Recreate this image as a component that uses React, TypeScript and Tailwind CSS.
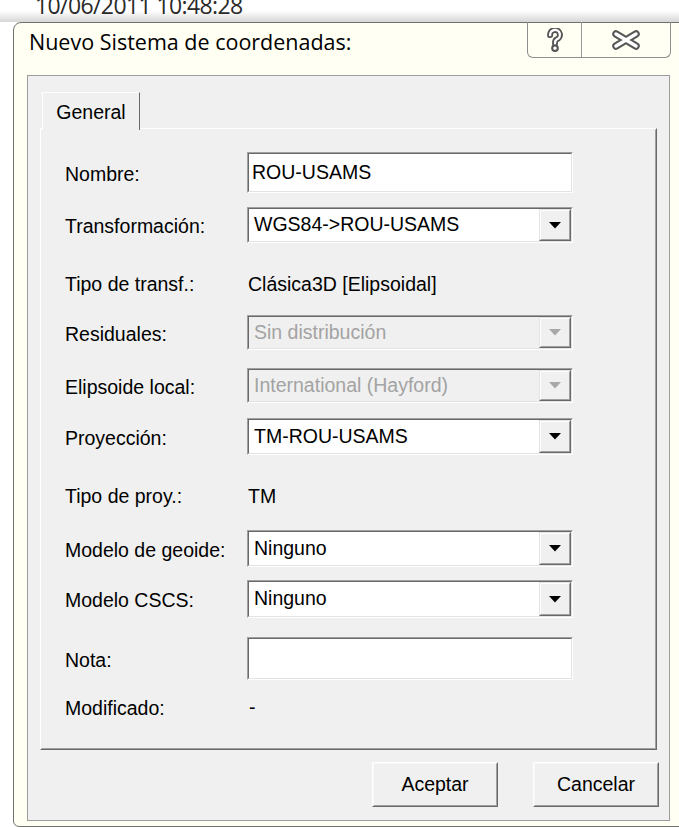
import React from 'react';

const ui = "font-['Liberation_Sans',Arial,sans-serif]";
const seg = "font-['Open_Sans','Noto_Sans',sans-serif]";

// sunken 3D edge used by text boxes and combo boxes
const Sunken = ({ className = '', children }: { className?: string; children?: React.ReactNode }) => (
  <div className={`border border-t-[#a0a0a0] border-l-[#a0a0a0] border-b-white border-r-white ${className}`}>
    <div className="h-full border border-t-[#696969] border-l-[#696969] border-b-[#e3e3e3] border-r-[#e3e3e3]">
      {children}
    </div>
  </div>
);

const Arrow = ({ disabled }: { disabled?: boolean }) => (
  <svg width="12" height="7" viewBox="0 0 12 7">
    <polygon points="0,0 12,0 6,6.5" fill={disabled ? '#a8a8a8' : '#000'} />
  </svg>
);

const TextBox = ({ value, h }: { value?: string; h: string }) => (
  <Sunken className={`w-[326px] ${h}`}>
    <div className="h-full bg-white flex items-center pl-[3px] text-[19.5px] text-black">{value}</div>
  </Sunken>
);

const Combo = ({ value, h, disabled }: { value: string; h: string; disabled?: boolean }) => (
  <Sunken className={`w-[326px] ${h}`}>
    <div className={`h-full flex items-center ${disabled ? 'bg-[#f0f0f0] text-[#a3a3a3]' : 'bg-white text-black'}`}>
      <div className="flex-1 pl-[5px] text-[19.5px] whitespace-nowrap">{value}</div>
      <div className="h-full w-[32px] border border-t-[#e3e3e3] border-l-[#e3e3e3] border-b-[#696969] border-r-[#696969]">
        <div className="h-full border border-t-white border-l-white border-b-[#a0a0a0] border-r-[#a0a0a0] bg-[#f0f0f0] flex items-center justify-center">
          <Arrow disabled={disabled} />
        </div>
      </div>
    </div>
  </Sunken>
);

const Row = ({ label, mt, h, children }: { label: string; mt: string; h: string; children: React.ReactNode }) => (
  <div className={`flex items-center ${mt} ${h}`}>
    <div className="w-[205px] shrink-0 pl-[23px] pt-[4px] text-[19.5px] text-black">{label}</div>
    {children}
  </div>
);

const PushButton = ({ label }: { label: string }) => (
  <div className="w-[126px] h-[45px] border border-t-white border-l-white border-b-[#696969] border-r-[#696969]">
    <div className="h-full border border-t-[#f8f8f8] border-l-[#f8f8f8] border-b-[#a0a0a0] border-r-[#a0a0a0] bg-[#f0f0f0] flex items-center justify-center text-[19.5px] text-black">
      {label}
    </div>
  </div>
);

export default function App() {
  return (
    <div className={`w-[679px] h-[827px] bg-white overflow-hidden ${ui}`}>
      {/* timestamp from the window behind */}
      <div className="h-[22px] overflow-hidden bg-linear-to-b from-white from-50% to-[#d6d6d6]">
        <div className={`${seg} pl-[35px] mt-[-6px] text-[23px] tracking-[-0.6px] leading-none text-[#2a2a2a] whitespace-nowrap`}>
          10/06/2011 10:48:28
        </div>
      </div>

      {/* dialog frame */}
      <div className="ml-[13px] w-[680px] h-[805px] border border-[#707070] rounded-tl-[8px] rounded-bl-[6px] bg-[#fffff3] pl-[13px]">
        <div className="h-[52px] flex items-start">
          <div className={`${seg} ml-[2px] mt-[3px] text-[21.5px] text-black whitespace-nowrap`}>Nuevo Sistema de coordenadas:</div>
          <div className="ml-auto mr-[21px] mt-[-1px] flex h-[36px] border border-t-0 border-[#8e8e8e] rounded-b-[6px]">
            <div className="w-[54px] flex items-center justify-center border-r border-[#9a9a9a]">
              <svg width="18" height="24" viewBox="0 0 16 22">
                <g fill="none" strokeLinecap="round" strokeLinejoin="round">
                  <path d="M3.5 6.5 A4.5 4.5 0 1 1 9.5 10.5 C8 11.3 8 12.2 8 14" stroke="#555" strokeWidth="5.5" />
                  <circle cx="8" cy="18.5" r="1" stroke="#555" strokeWidth="5" />
                  <path d="M3.5 6.5 A4.5 4.5 0 1 1 9.5 10.5 C8 11.3 8 12.2 8 14" stroke="#fff" strokeWidth="2.2" />
                  <circle cx="8" cy="18.5" r="0.3" stroke="#fff" strokeWidth="2" />
                </g>
              </svg>
            </div>
            <div className="w-[88px] flex items-center justify-center">
              <svg width="28" height="20" viewBox="0 0 28 20">
                <g strokeLinecap="round">
                  <path d="M4 4 L24 16 M24 4 L4 16" stroke="#555" strokeWidth="7.5" />
                  <path d="M4 4 L24 16 M24 4 L4 16" stroke="#fff" strokeWidth="3.5" />
                </g>
              </svg>
            </div>
          </div>
        </div>

        {/* client area */}
        <div className="w-[643px] h-[746px] border border-[#9c9c9c] bg-[#f0f0f0] px-[12px] pt-[16px]">
          <div className="relative z-10 ml-[2px] mb-[-2px] w-[98px] h-[38px] border border-b-0 border-t-white border-l-white border-r-[#696969] bg-[#f0f0f0] flex items-center justify-center text-[19.5px] text-black">
            <div className="pt-[2px]">General</div>
          </div>

          {/* tab page */}
          <div className="h-[622px] border border-t-white border-l-white border-b-[#696969] border-r-[#696969]">
            <div className="h-full border border-t-[#f0f0f0] border-l-[#f0f0f0] border-b-[#a0a0a0] border-r-[#a0a0a0]">
              <Row label="Nombre:" mt="mt-[22px]" h="h-[41px]">
                <TextBox value="ROU-USAMS" h="h-[41px]" />
              </Row>
              <Row label="Transformación:" mt="mt-[14px]" h="h-[36px]">
                <Combo value="WGS84->ROU-USAMS" h="h-[36px]" />
              </Row>
              <Row label="Tipo de transf.:" mt="mt-[20px]" h="h-[39px]">
                <div className="pl-[1px] pt-[4px] text-[19.5px] text-black">Clásica3D [Elipsoidal]</div>
              </Row>
              <Row label="Residuales:" mt="mt-[13px]" h="h-[35px]">
                <Combo value="Sin distribución" h="h-[35px]" disabled />
              </Row>
              <Row label="Elipsoide local:" mt="mt-[18px]" h="h-[35px]">
                <Combo value="International (Hayford)" h="h-[35px]" disabled />
              </Row>
              <Row label="Proyección:" mt="mt-[15px]" h="h-[37px]">
                <Combo value="TM-ROU-USAMS" h="h-[37px]" />
              </Row>
              <Row label="Tipo de proy.:" mt="mt-[21px]" h="h-[38px]">
                <div className="pl-[1px] pt-[4px] text-[19.5px] text-black">TM</div>
              </Row>
              <Row label="Modelo de geoide:" mt="mt-[16px]" h="h-[37px]">
                <Combo value="Ninguno" h="h-[37px]" />
              </Row>
              <Row label="Modelo CSCS:" mt="mt-[13px]" h="h-[38px]">
                <Combo value="Ninguno" h="h-[38px]" />
              </Row>
              <Row label="Nota:" mt="mt-[19px]" h="h-[43px]">
                <TextBox h="h-[43px]" />
              </Row>
              <Row label="Modificado:" mt="mt-[10px]" h="h-[34px]">
                <div className="pl-[2px] pt-[2px] text-[19.5px] text-black">-</div>
              </Row>
            </div>
          </div>

          <div className="mt-[12px] mr-[-2px] flex justify-end gap-[35px]">
            <PushButton label="Aceptar" />
            <PushButton label="Cancelar" />
          </div>
        </div>
      </div>
    </div>
  );
}
